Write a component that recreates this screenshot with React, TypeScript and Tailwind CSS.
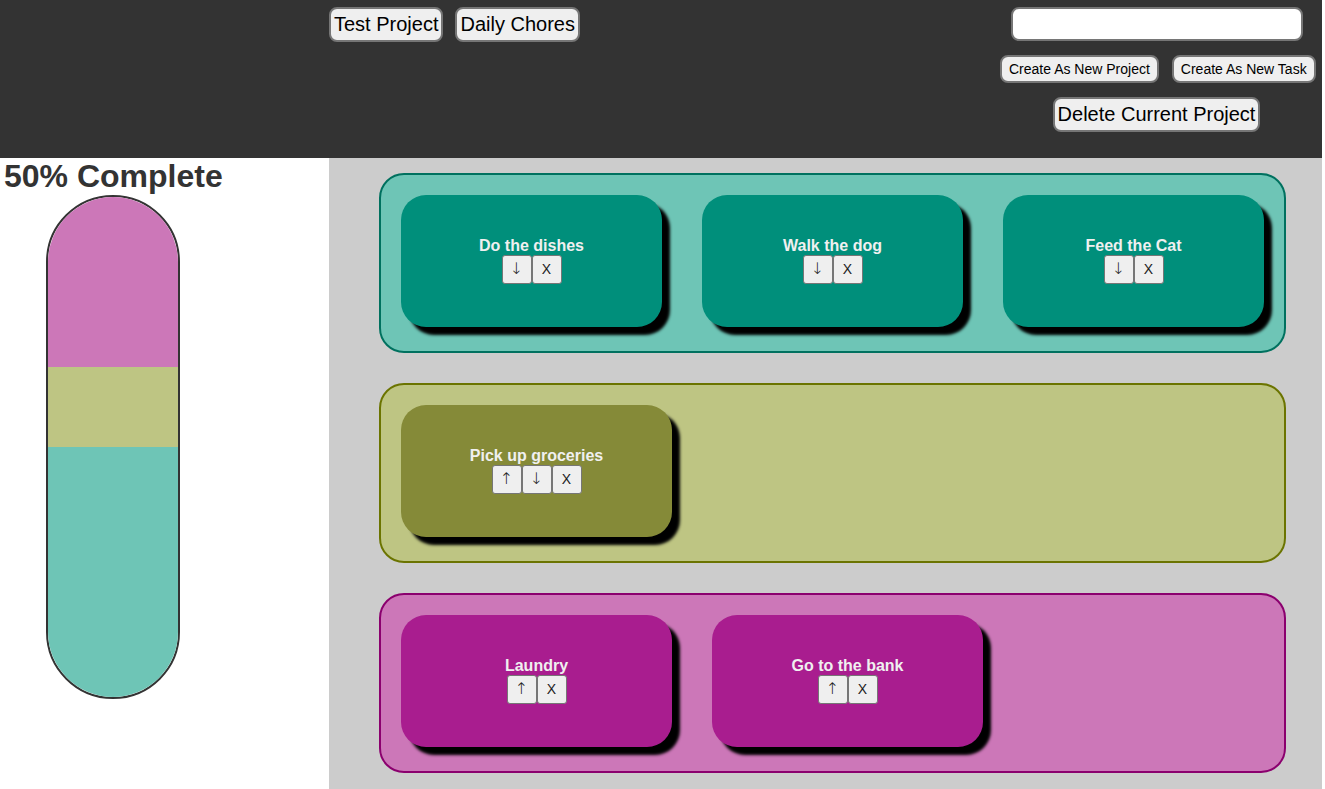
import React from 'react';

type Task = { name: string; up: boolean; down: boolean };
type Group = { bg: string; border: string; card: string; tasks: Task[] };

const groups: Group[] = [
  {
    bg: 'bg-[#6ec5b6]',
    border: 'border-[#00715f]',
    card: 'bg-[#008f7b]',
    tasks: [
      { name: 'Do the dishes', up: false, down: true },
      { name: 'Walk the dog', up: false, down: true },
      { name: 'Feed the Cat', up: false, down: true },
    ],
  },
  {
    bg: 'bg-[#bec583]',
    border: 'border-[#6b7400]',
    card: 'bg-[#858a38]',
    tasks: [{ name: 'Pick up groceries', up: true, down: true }],
  },
  {
    bg: 'bg-[#cc77b8]',
    border: 'border-[#8b006e]',
    card: 'bg-[#a91d8f]',
    tasks: [
      { name: 'Laundry', up: true, down: false },
      { name: 'Go to the bank', up: true, down: false },
    ],
  },
];

const font = { fontFamily: '"Liberation Sans", Arial, sans-serif' };

const HeaderButton = ({ label, size }: { label: string; size: 'lg' | 'sm' }) => (
  <button
    className={`bg-[#efefef] text-black border-2 border-[#767676] rounded-lg leading-none whitespace-nowrap ${
      size === 'lg' ? 'text-[20px] h-[35px] px-[3px] pb-[1px]' : 'text-[14px] h-[28px] px-[7px]'
    }`}
  >
    {label}
  </button>
);

const SmallButton = ({ label, arrow }: { label: string; arrow?: boolean }) => (
  <button
    className={`w-[30px] h-[29px] bg-[#efefef] border border-[#767676] rounded-[3px] text-[#222] leading-none ${
      arrow ? "text-[16px] font-['DejaVu_Sans',sans-serif] font-extralight" : 'text-[14px]'
    }`}
  >
    {label}
  </button>
);

export default function App() {
  return (
    <div className="w-[1322px] min-h-[789px] flex flex-col" style={font}>
      {/* Header */}
      <header className="h-[158px] bg-[#333333] flex shrink-0">
        <div className="w-[329px]" />
        <div className="flex-1 flex gap-[12px] pt-[7px] items-start">
          <HeaderButton label="Test Project" size="lg" />
          <HeaderButton label="Daily Chores" size="lg" />
        </div>
        <div className="w-[313px] mr-[9px] flex flex-col items-center pt-[7px]">
          <input className="self-start ml-[11px] w-[292px] h-[34px] bg-white rounded-lg border-2 border-[#767676]" />
          <div className="self-start flex gap-[13px] mt-[14px]">
            <HeaderButton label="Create As New Project" size="sm" />
            <HeaderButton label="Create As New Task" size="sm" />
          </div>
          <div className="mt-[14px]">
            <HeaderButton label="Delete Current Project" size="lg" />
          </div>
        </div>
      </header>

      <div className="flex flex-1">
        {/* Sidebar */}
        <aside className="w-[329px] bg-white shrink-0">
          <h1 className="text-[32px] font-bold text-[#333333] leading-none pt-[2px] pl-[4px]">50% Complete</h1>
          <div className="ml-[46px] mt-[3px] w-[134px] h-[504px] rounded-full border-2 border-[#333333] overflow-hidden flex flex-col">
            <div className="h-[170px] bg-[#cc77b8]" />
            <div className="h-[80px] bg-[#bec583]" />
            <div className="flex-1 bg-[#6ec5b6]" />
          </div>
        </aside>

        {/* Main */}
        <main className="flex-1 bg-[#cccccc] pt-[15px] pl-[50px] pr-[36px] flex flex-col gap-[30px] pb-[14px]">
          {groups.map((g, i) => (
            <section
              key={i}
              className={`h-[180px] border-2 rounded-[25px] flex items-start ${g.bg} ${g.border}`}
            >
              {g.tasks.map((t) => (
                <div
                  key={t.name}
                  className={`m-[20px] basis-[271px] shrink h-[132px] rounded-[25px] shadow-[8px_8px_3px_#000] flex flex-col items-center justify-center ${g.card}`}
                >
                  <div className="text-[16px] font-bold text-[#f0f0f0] leading-[18px] -mt-[2px]">{t.name}</div>
                  <div className="flex">
                    {t.up && <SmallButton label="↑" arrow />}
                    {t.down && <SmallButton label="↓" arrow />}
                    <SmallButton label="X" />
                  </div>
                </div>
              ))}
            </section>
          ))}
        </main>
      </div>
    </div>
  );
}
